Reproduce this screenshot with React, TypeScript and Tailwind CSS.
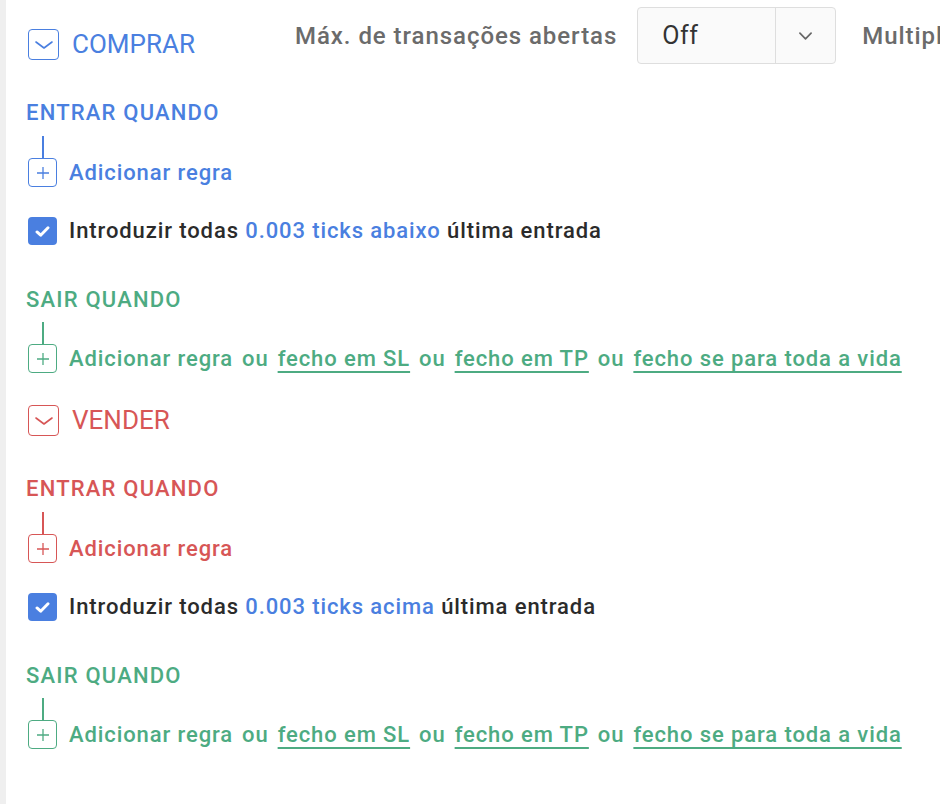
import type { ReactNode } from 'react'

type Tone = 'blue' | 'red' | 'green'

const toneText: Record<Tone, string> = {
  blue: 'text-[#4a7fe0]',
  red: 'text-[#d75656]',
  green: 'text-[#4dab82]',
}

const toneBorder: Record<Tone, string> = {
  blue: 'border-[#4a7fe0]',
  red: 'border-[#d75656]',
  green: 'border-[#4dab82]',
}

const toneBg: Record<Tone, string> = {
  blue: 'bg-[#4a7fe0]',
  red: 'bg-[#d75656]',
  green: 'bg-[#4dab82]',
}

function ChevronDown({ className }: { className?: string }) {
  return (
    <svg viewBox="0 0 18 8" className={className} fill="none" stroke="currentColor" strokeWidth="1.6" strokeLinecap="round" strokeLinejoin="round">
      <path d="M1 1l8 6 8-6" />
    </svg>
  )
}

function SideHeader({ tone, label, children }: { tone: Tone; label: string; children?: ReactNode }) {
  return (
    <div className="flex items-center h-[32px]">
      <div className="flex items-center w-[267px] shrink-0">
        <div className={`w-[31px] h-[31px] rounded-[4px] border-[1.5px] ${toneBorder[tone]} ${toneText[tone]} flex items-center justify-center`}>
          <ChevronDown className="w-[18px] h-[8px] mt-[2px]" />
        </div>
        <span className={`ml-[13px] text-[26px] leading-[32px] ${toneText[tone]}`}>{label}</span>
      </div>
      {children}
    </div>
  )
}

function SectionTitle({ tone, children, className = '' }: { tone: Tone; children: ReactNode; className?: string }) {
  return (
    <div className={`h-[24px] leading-[24px] text-[22px] tracking-[1.2px] font-medium -ml-[2px] ${toneText[tone]} ${className}`}>{children}</div>
  )
}

function AddRule({ tone, children, className = '' }: { tone: Tone; children?: ReactNode; className?: string }) {
  return (
    <div className={className}>
      <div className={`ml-[14px] w-[1.5px] h-[22px] ${toneBg[tone]}`} />
      <div className="flex items-center h-[29px]">
        <div className={`w-[29px] h-[29px] rounded-[4px] border-[1.5px] ${toneBorder[tone]} ${toneText[tone]} flex items-center justify-center`}>
          <svg viewBox="0 0 14 14" className="w-[12px] h-[12px]" fill="none" stroke="currentColor" strokeWidth="1.5">
            <path d="M7 0v14M0 7h14" />
          </svg>
        </div>
        <div className={`ml-[12px] text-[22px] tracking-[0.9px] leading-[29px] font-medium whitespace-nowrap ${toneText[tone]}`}>
          Adicionar regra{children}
        </div>
      </div>
    </div>
  )
}

function ExitLinks() {
  return (
    <>
      <span className="mx-[9px]">ou</span>
      <span className="underline decoration-2 underline-offset-[5px]">fecho em SL</span>
      <span className="mx-[9px]">ou</span>
      <span className="underline decoration-2 underline-offset-[5px]">fecho em TP</span>
      <span className="mx-[9px]">ou</span>
      <span className="underline decoration-2 underline-offset-[5px]">fecho se para toda a vida</span>
    </>
  )
}

function EntryCheck({ direction, className = '' }: { direction: string; className?: string }) {
  return (
    <div className={`flex items-center h-[28px] ${className}`}>
      <div className="w-[29px] h-[28px] rounded-[4px] bg-[#4a7fe0] flex items-center justify-center">
        <svg viewBox="0 0 16 12" className="w-[15px] h-[11px]" fill="none" stroke="white" strokeWidth="3.2" strokeLinecap="round" strokeLinejoin="round">
          <path d="M2 6.5l4 3.5 8-8" />
        </svg>
      </div>
      <div className="ml-[12px] text-[22px] tracking-[0.9px] leading-[28px] font-medium text-[#2b2b2b] whitespace-nowrap">
        Introduzir todas <span className="text-[#4a7fe0]">0.003 ticks {direction}</span> última entrada
      </div>
    </div>
  )
}

function SideBlock({ tone, label, direction, header }: { tone: Tone; label: string; direction: string; header?: ReactNode }) {
  return (
    <div className="flex flex-col">
      <SideHeader tone={tone} label={label}>{header}</SideHeader>
      <SectionTitle tone={tone} className="mt-[41px]">ENTRAR QUANDO</SectionTitle>
      <AddRule tone={tone} className="mt-[11px]" />
      <EntryCheck direction={direction} className="mt-[30px]" />
      <SectionTitle tone="green" className="mt-[43px]">SAIR QUANDO</SectionTitle>
      <AddRule tone="green" className="mt-[10px]">
        <ExitLinks />
      </AddRule>
    </div>
  )
}

function MaxTrades() {
  return (
    <div className="flex items-center mb-[17px] whitespace-nowrap">
      <span className="text-[24px] tracking-[0.95px] font-medium text-[#6b6b6b]">Máx. de transações abertas</span>
      <div className="ml-[20px] flex w-[199px] h-[57px] rounded-[4px] border-[1.5px] border-[#dedede] bg-[#fafafa]">
        <div className="flex-1 flex items-center pl-[24px] text-[25px] tracking-[0.5px] text-[#333333]">Off</div>
        <div className="w-[60px] border-l-[1.5px] border-[#dedede] flex items-center justify-center text-[#666666]">
          <svg viewBox="0 0 14 8" className="w-[13px] h-[8px]" fill="none" stroke="currentColor" strokeWidth="1.8" strokeLinecap="round" strokeLinejoin="round">
            <path d="M1 1l6 6 6-6" />
          </svg>
        </div>
      </div>
      <span className="ml-[26px] text-[24px] tracking-[0.95px] font-medium text-[#6b6b6b]">Multiplicador</span>
    </div>
  )
}

export default function App() {
  return (
    <div className="flex h-[804px] w-[940px] overflow-hidden bg-white font-['Roboto',sans-serif]">
      <div className="w-[6px] shrink-0 bg-[#efefef]" />
      <div className="flex-1 min-w-0 pl-[22px] pt-[28px] flex flex-col">
        <SideBlock tone="blue" label="COMPRAR" direction="abaixo" header={<MaxTrades />} />
        <div className="mt-[31px]">
          <SideBlock tone="red" label="VENDER" direction="acima" />
        </div>
      </div>
    </div>
  )
}
